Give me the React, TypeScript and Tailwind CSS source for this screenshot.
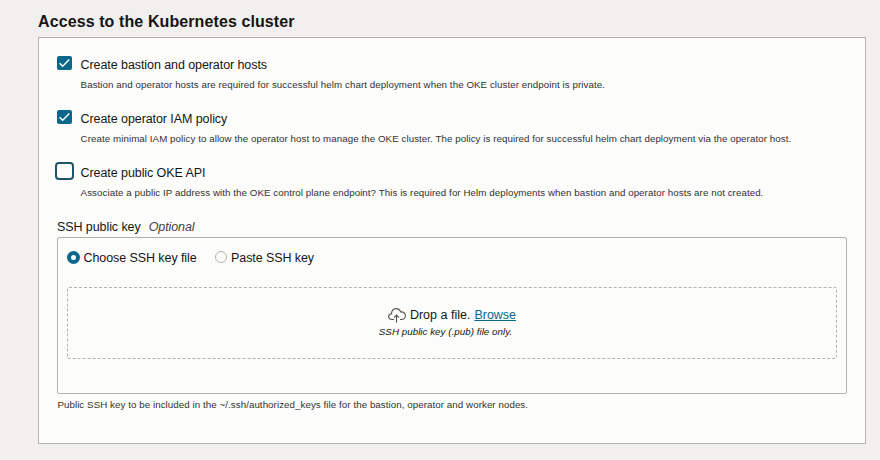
import React from "react";

type Option = { label: string; help: string; checked: boolean };

const options: Option[] = [
  {
    label: "Create bastion and operator hosts",
    help: "Bastion and operator hosts are required for successful helm chart deployment when the OKE cluster endpoint is private.",
    checked: true,
  },
  {
    label: "Create operator IAM policy",
    help: "Create minimal IAM policy to allow the operator host to manage the OKE cluster. The policy is required for successful helm chart deployment via the operator host.",
    checked: true,
  },
  {
    label: "Create public OKE API",
    help: "Associate a public IP address with the OKE control plane endpoint? This is required for Helm deployments when bastion and operator hosts are not created.",
    checked: false,
  },
];

function Checkbox({ checked }: { checked: boolean }) {
  if (!checked) {
    return <span className="-ml-0.5 -mt-0.5 h-[18px] w-[19px] shrink-0 rounded-[4px] border-2 border-[#1f5368] bg-[#fcfdfb]" />;
  }
  return (
    <span className="flex h-[14px] w-[15px] shrink-0 items-center justify-center rounded-[2px] bg-[#0b688b]">
      <svg width="15" height="14" viewBox="0 0 15 14" fill="none" stroke="#fff" strokeWidth="1.4">
        <path d="M2.6 7.2 L5.7 10.2 L12.3 3.6" />
      </svg>
    </span>
  );
}

function OptionRow({ option }: { option: Option }) {
  return (
    <div className="flex h-[54px]">
      <div className="flex w-[23.6px] shrink-0 pt-px">
        <Checkbox checked={option.checked} />
      </div>
      <div>
        <div className="h-[20px] text-[12.5px] leading-[20px] tracking-[-0.08px]">{option.label}</div>
        <div className="h-[20px] text-[9.75px] leading-[20px] tracking-[0.062px] text-[#33312f]">{option.help}</div>
      </div>
    </div>
  );
}

export default function App() {
  return (
    <main className="h-[460px] w-[880px] overflow-hidden whitespace-nowrap bg-[#f1f0ee] pl-[38px] font-['Liberation_Sans',Arial,sans-serif] text-[#161513]">
      <h1 className="h-[37px] pt-[12px] text-[16px] font-bold leading-[20px] tracking-[0.1px]">Access to the Kubernetes cluster</h1>
      <section className="h-[407px] w-[828px] border border-[#b5b3b0] bg-[#fcfdfb] pl-[18px] pt-[17px]">
        {options.map((o) => (
          <OptionRow key={o.label} option={o} />
        ))}
        <div className="flex h-[20px] gap-2 text-[12.5px] leading-[20px] tracking-[-0.08px]">
          <span>SSH public key</span>
          <em className="text-[#45423f]">Optional</em>
        </div>
        <div className="h-[157px] w-[790px] rounded-[2px] border border-[#b5b3b0] px-[9px] pt-[10px]">
          <div className="flex h-[39px] text-[12.5px] leading-[20px] tracking-[-0.08px]">
            <label className="flex w-[148px] gap-[3.5px]">
              <span className="mt-[3px] flex size-[13px] items-center justify-center rounded-full bg-[#0b688b]">
                <span className="size-[5px] rounded-full bg-white" />
              </span>
              Choose SSH key file
            </label>
            <label className="flex gap-1">
              <span className="mt-[3px] size-[12px] rounded-full border border-[#b5b3b0]" />
              Paste SSH key
            </label>
          </div>
          <div className="flex h-[72px] w-[770px] flex-col items-center rounded-[2px] border border-dashed border-[#b5b3b0] pt-[17px]">
            <div className="flex h-[18px] gap-1 text-[12.5px] leading-[20px]">
              <svg className="mt-[3px]" width="18" height="15" viewBox="0 0 18 15" fill="none" stroke="#55524f" strokeWidth="1.1">
                <path d="M6 11.5 H4.2 C2.1 11.5 .6 10.3 .6 8.6 C.6 6.9 1.9 5.8 3.6 5.7 C3.3 2.8 5.3 .6 8 .6 C10.3 .6 12 1.9 12.6 3.9 C15.4 3.6 17.4 5.2 17.4 7.6 C17.4 9.9 15.7 11.5 13.5 11.5 H12" />
                <path d="M8.5 14.5 V7 M6 9.6 L8.5 7 L11 9.6" />
              </svg>
              <span>Drop a file.</span>
              <a className="text-[#0b688b] underline">Browse</a>
            </div>
            <em className="mr-[13px] text-[9.75px] leading-[18px] tracking-[0.04px]">SSH public key (.pub) file only.</em>
          </div>
        </div>
        <div className="pl-[0.4px] text-[9.75px] leading-[22px] tracking-[0.06px] text-[#33312f]">
          Public SSH key to be included in the ~/.ssh/authorized_keys file for the bastion, operator and worker nodes.
        </div>
      </section>
    </main>
  );
}
